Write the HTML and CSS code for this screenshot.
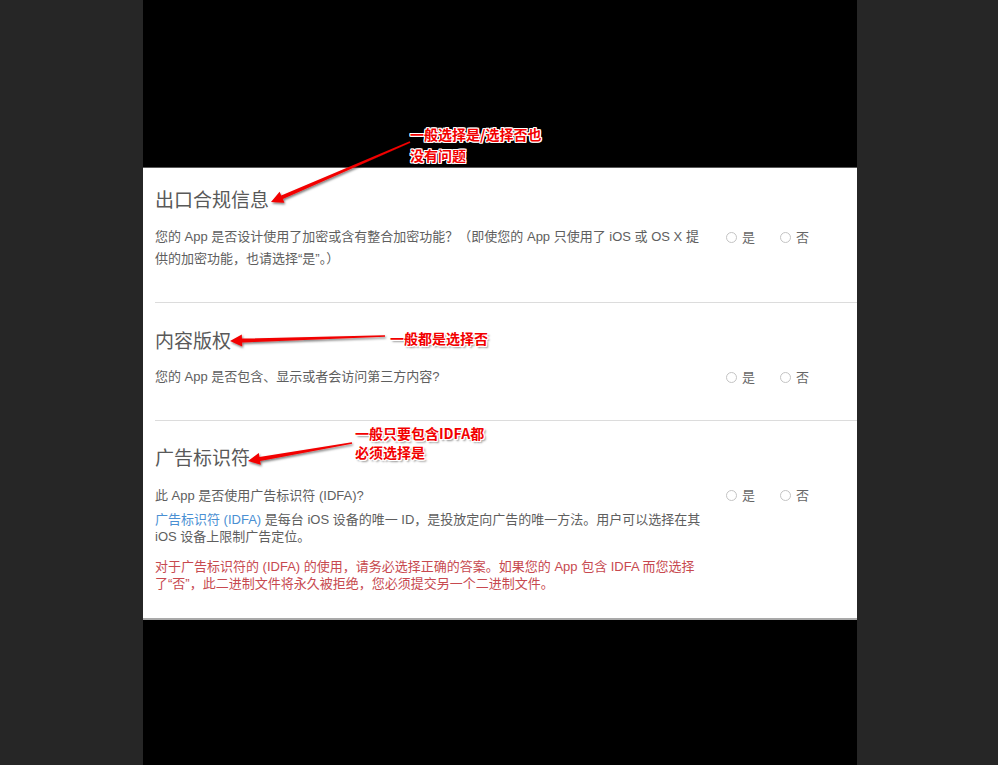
FILE: index.html
```html
<!DOCTYPE html>
<html lang="zh-CN">
<head>
<meta charset="utf-8">
<title>App 信息</title>
<link rel="stylesheet" href="styles.css">
</head>
<body>
<div class="stage">
  <div class="side"></div>
  <div class="screen">
    <div class="top-black"></div>
    <div class="panel">
      <section class="block block-first">
        <h2 class="title">出口合规信息</h2>
        <div class="row">
          <div class="text text-loose">
            <p>您的 App 是否设计使用了加密或含有整合加密功能？（即使您的 App 只使用了 iOS 或 OS X 提供的加密功能，也请选择“是”。）</p>
          </div>
          <div class="radios">
            <span class="radio"><span class="dot"></span>是</span>
            <span class="radio"><span class="dot"></span>否</span>
          </div>
        </div>
      </section>
      <section class="block block-second">
        <h2 class="title">内容版权</h2>
        <div class="row">
          <div class="text text-loose">
            <p>您的 App 是否包含、显示或者会访问第三方内容?</p>
          </div>
          <div class="radios">
            <span class="radio"><span class="dot"></span>是</span>
            <span class="radio"><span class="dot"></span>否</span>
          </div>
        </div>
      </section>
      <section class="block block-third">
        <h2 class="title">广告标识符</h2>
        <div class="row">
          <div class="text text-tight">
            <p class="q">此 App 是否使用广告标识符 (IDFA)?</p>
            <p class="info"><span class="link">广告标识符 (IDFA)</span> 是每台 iOS 设备的唯一 ID，是投放定向广告的唯一方法。用户可以选择在其 iOS 设备上限制广告定位。</p>
            <p class="warn">对于广告标识符的 (IDFA) 的使用，请务必选择正确的答案。如果您的 App 包含 IDFA 而您选择了“否”，此二进制文件将永久被拒绝，您必须提交另一个二进制文件。</p>
          </div>
          <div class="radios">
            <span class="radio"><span class="dot"></span>是</span>
            <span class="radio"><span class="dot"></span>否</span>
          </div>
        </div>
      </section>
    </div>
    <div class="bottom-black"></div>
  </div>
  <div class="side"></div>

  <svg class="arrows" width="998" height="765" viewBox="0 0 998 765" aria-hidden="true">
    <defs>
      <filter id="sh" x="-20%" y="-50%" width="140%" height="200%">
        <feDropShadow dx="1" dy="1.5" stdDeviation="1.2" flood-color="#000" flood-opacity="0.55"/>
      </filter>
    </defs>
    <g fill="#f20000" filter="url(#sh)">
      <polygon points="409.7,141.3 281.2,195.4 279.6,191.7 271,202 284.4,202.8 282.8,199.1 410.3,142.7"/>
      <polygon points="384.98,335.25 241.94,338.6 241.8,334.6 230,341 242.2,346.6 242.06,342.6 385.02,336.75"/>
      <polygon points="351.87,442.26 259.46,456.98 258.78,453.04 248,461 260.82,464.86 260.14,460.92 352.13,443.74"/>
    </g>
  </svg>
  <div class="note note-1">一般选择是/选择否也<br>没有问题</div>
  <div class="note note-2">一般都是选择否</div>
  <div class="note note-3">一般只要包含IDFA都<br>必须选择是</div>
</div>
</body>
</html>
```

FILE: styles.css
```css
html, body {
  margin: 0;
  padding: 0;
  background: #262626;
}

.stage {
  position: relative;
  width: 998px;
  height: 765px;
  overflow: hidden;
  display: grid;
  grid-template-columns: 143px 714px 1fr;
  font-family: "Liberation Sans", "Noto Sans CJK SC", sans-serif;
}

.side {
  background: #262626;
}

.screen {
  background: #000;
  display: flex;
  flex-direction: column;
}

.top-black {
  height: 167px;
  border-bottom: 1px solid #5a5a5a;
}

.panel {
  background: #fff;
  height: 452px;
  border-bottom: 2px solid #a9a9a9;
  padding: 0 0 0 12px;
  box-sizing: border-box;
}

.bottom-black {
  flex: 1;
}

.block {
  border-bottom: 1px solid #dcdcdc;
}

.block-first {
  padding: 19px 0 32px;
}

.block-second {
  padding: 25px 0 32px;
}

.block-second .title {
  margin-bottom: 14px;
}

.block-third {
  padding: 24px 0 0;
  border-bottom: none;
}

.title {
  margin: 0 0 15px;
  font-family: "Noto Sans CJK SC", sans-serif;
  font-weight: 400;
  font-size: 19px;
  line-height: 24px;
  color: #595959;
}

.row {
  display: flex;
  align-items: flex-start;
}

.text {
  width: 548px;
  font-size: 13px;
  color: #5e5e5e;
}

.text p {
  margin: 0;
}

.text-loose {
  line-height: 22px;
}

.text-tight {
  line-height: 17px;
}

.text-tight .q {
  margin-top: 3px;
}

.text-tight .info {
  margin-top: 7px;
}

.text-tight .warn {
  margin-top: 13px;
  color: #c7494f;
}

.link {
  color: #4a8fd3;
}

.radios {
  margin-left: 23px;
  display: flex;
  gap: 25px;
  font-family: "Noto Sans CJK SC", sans-serif;
  font-size: 13px;
  line-height: 22px;
  color: #666;
}

.block-third .radios {
  margin-top: 0;
}

.radio {
  display: inline-flex;
  align-items: center;
}

.dot {
  width: 11px;
  height: 11px;
  border: 1px solid #c4c4c4;
  border-radius: 50%;
  box-sizing: border-box;
  margin-right: 5px;
}

.arrows {
  position: absolute;
  left: 0;
  top: 0;
  pointer-events: none;
}

.note {
  position: absolute;
  font-family: "Noto Sans CJK SC", sans-serif;
  font-weight: 700;
  font-size: 14px;
  color: #f20000;
  white-space: nowrap;
  text-shadow:
    1px 0 0 #fff, -1px 0 0 #fff, 0 1px 0 #fff, 0 -1px 0 #fff,
    1px 1px 0 #fff, -1px -1px 0 #fff, 1px -1px 0 #fff, -1px 1px 0 #fff,
    2px 2px 2px rgba(0, 0, 0, 0.45);
}

.note-1 {
  left: 410px;
  top: 124px;
  line-height: 21px;
}

.note-2 {
  left: 390px;
  top: 328px;
  line-height: 20px;
}

.note-3 {
  left: 355px;
  top: 424px;
  line-height: 19px;
}
```
